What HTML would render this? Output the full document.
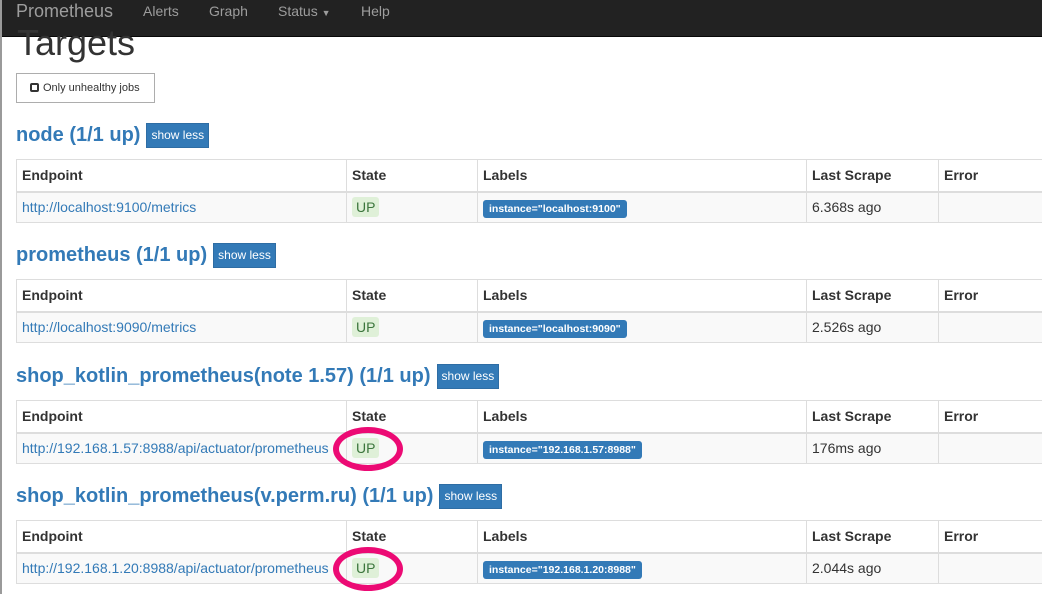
<!DOCTYPE html>
<html><head><meta charset="utf-8"><style>
*{box-sizing:border-box}
body{margin:0;width:1042px;height:594px;overflow:hidden;background:#fff;font-family:"Liberation Sans",sans-serif;color:#333;position:relative;font-size:14px}
.lb{position:absolute;left:0;top:0;width:2px;height:594px;background:#9a9a9a}
.nav{position:absolute;left:0;top:0;width:1042px;height:37px;background:#222;border-bottom:1px solid #080808}
.nav span{position:absolute;top:3px;color:#9d9d9d;font-size:14px}
.brand{font-size:18px!important;top:1px!important;left:16px}
.title{position:absolute;left:17px;top:18px;font-size:36px;color:#333;line-height:50px}
.chk{position:absolute;left:16px;top:73px;width:139px;height:30px;border:1px solid #adadad;background:#fff;font-size:11px;padding:8px 0 0 13px;color:#333}
.chk i{display:inline-block;width:9px;height:9px;border:2px solid #333;border-radius:2px;margin-right:4px;vertical-align:-1px}
.sec{position:absolute;left:16px;width:1040px}
.h{position:absolute;left:0;top:0;font-size:20px;font-weight:bold;color:#337ab7;white-space:nowrap;line-height:24px}
.btn{display:inline-block;background:#337ab7;border:1px solid #2e6da4;color:#fff;font-size:12px;font-weight:normal;padding:4px 4px;margin-left:6px;vertical-align:2px;line-height:15px}
table{position:absolute;left:0;top:36px;border-collapse:collapse;width:1040px}
td{border:1px solid #ddd;height:32px;padding:0 5px;font-size:14px;vertical-align:middle}
tr.hd td{font-weight:bold;border-bottom:2px solid #ddd}
tr.r td{background:#f9f9f9;height:31px}
a{color:#337ab7;text-decoration:none}
.up{display:inline-block;background:#dff0d8;color:#3c763d;padding:3px 4px 2px;border-radius:3px;font-size:14px;line-height:15px;margin-top:0}
.lab{display:inline-block;background:#337ab7;color:#fff;font-size:10.5px;font-weight:bold;padding:3px 6px;border-radius:3px;margin-top:3px}
.ring{position:absolute;width:70px;height:44px;border:6px solid #ec0a74;border-radius:50%}
</style></head><body>
<div class="nav"><span class="brand">Prometheus</span><span style="left:143px">Alerts</span><span style="left:209px">Graph</span><span style="left:278px">Status <small style="font-size:9px">▼</small></span><span style="left:361px">Help</span></div>
<div class="lb"></div>
<div class="title">Targets</div>
<div class="chk"><i></i>Only unhealthy jobs</div>

<div class="sec" style="top:123px"><div class="h">node (1/1 up)<span class="btn">show less</span></div>
<table><tr class="hd"><td style="width:330px">Endpoint</td><td style="width:131px">State</td><td style="width:329px">Labels</td><td style="width:132px">Last Scrape</td><td>Error</td></tr>
<tr class="r"><td><a>http://localhost:9100/metrics</a></td><td><span class="up">UP</span></td><td><span class="lab">instance="localhost:9100"</span></td><td>6.368s ago</td><td></td></tr></table></div>

<div class="sec" style="top:243px"><div class="h">prometheus (1/1 up)<span class="btn">show less</span></div>
<table><tr class="hd"><td style="width:330px">Endpoint</td><td style="width:131px">State</td><td style="width:329px">Labels</td><td style="width:132px">Last Scrape</td><td>Error</td></tr>
<tr class="r"><td><a>http://localhost:9090/metrics</a></td><td><span class="up">UP</span></td><td><span class="lab">instance="localhost:9090"</span></td><td>2.526s ago</td><td></td></tr></table></div>

<div class="sec" style="top:364px"><div class="h">shop_kotlin_prometheus(note 1.57) (1/1 up)<span class="btn">show less</span></div>
<table><tr class="hd"><td style="width:330px">Endpoint</td><td style="width:131px">State</td><td style="width:329px">Labels</td><td style="width:132px">Last Scrape</td><td>Error</td></tr>
<tr class="r"><td><a>http://192.168.1.57:8988/api/actuator/prometheus</a></td><td><span class="up">UP</span></td><td><span class="lab">instance="192.168.1.57:8988"</span></td><td>176ms ago</td><td></td></tr></table></div>

<div class="sec" style="top:484px"><div class="h">shop_kotlin_prometheus(v.perm.ru) (1/1 up)<span class="btn">show less</span></div>
<table><tr class="hd"><td style="width:330px">Endpoint</td><td style="width:131px">State</td><td style="width:329px">Labels</td><td style="width:132px">Last Scrape</td><td>Error</td></tr>
<tr class="r"><td><a>http://192.168.1.20:8988/api/actuator/prometheus</a></td><td><span class="up">UP</span></td><td><span class="lab">instance="192.168.1.20:8988"</span></td><td>2.044s ago</td><td></td></tr></table></div>

<div class="ring" style="left:333px;top:427px"></div>
<div class="ring" style="left:333px;top:547px"></div>
</body></html>
